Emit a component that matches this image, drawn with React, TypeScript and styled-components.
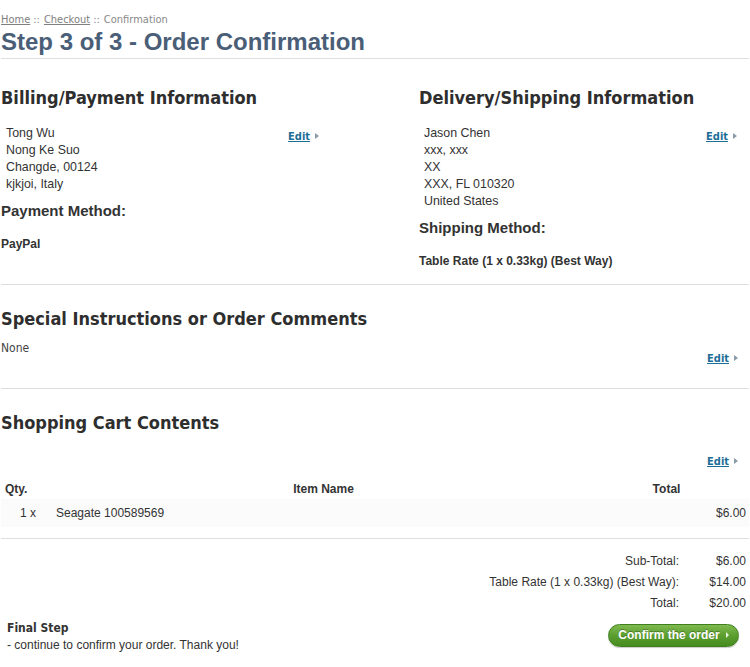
import React from "react";
import styled, {createGlobalStyle} from "styled-components";

const GlobalStyle = createGlobalStyle`
  html, body {
    margin: 0;
    padding: 0;
    background: #ffffff;
  }
  body {
    font-family: "Liberation Sans", Arial, sans-serif;
    font-size: 12px;
    color: #333333;
  }
`;

const tahoma = `"DejaVu Sans Condensed", "DejaVu Sans", Tahoma, sans-serif`;

const Page = styled.div`
  width: 748px;
  padding: 13px 0 0 1px;
`;

const Crumbs = styled.div`
  font-family: ${tahoma};
  font-size: 11px;
  color: #888888;
  line-height: 14px;
`;

const CrumbLink = styled.a`
  color: #808080;
  text-decoration: underline;
`;

const Sep = styled.span`
  margin: 0 4px 0 3px;
`;

const Title = styled.h1`
  margin: 1px 0 0 0;
  padding-bottom: 2px;
  font-family: "Liberation Sans", Arial, sans-serif;
  font-size: 24px;
  line-height: 28px;
  font-weight: bold;
  color: #4a5e77;
  border-bottom: 1px solid #dedede;
`;

const Columns = styled.div`
  display: grid;
  grid-template-columns: 418px 1fr;
  border-bottom: 1px solid #dedede;
  padding-bottom: 16px;
`;

const Section = styled.section<{ $pad?: number }>`
  border-bottom: 1px solid #dedede;
  padding-bottom: ${p => p.$pad ?? 0}px;
`;

const Heading = styled.h2<{ $top?: number }>`
  margin: 0;
  padding-top: ${p => p.$top ?? 28}px;
  font-family: ${tahoma};
  font-size: 18px;
  line-height: 22px;
  font-weight: bold;
  color: #2e2e2e;
`;

const InfoRow = styled.div<{ $width?: number }>`
  display: flex;
  justify-content: space-between;
  align-items: flex-start;
  width: ${p => (p.$width ? `${p.$width}px` : "auto")};
`;

const Address = styled.div`
  padding: 16px 0 0 5px;
  line-height: 17px;
  font-size: 12.4px;
  color: #333333;
`;

const EditLink = styled.a<{ $top?: number }>`
  margin-top: ${p => p.$top ?? 0}px;
  font-family: ${tahoma};
  font-size: 11px;
  font-weight: bold;
  line-height: 14px;
  color: #1d6e97;
  text-decoration: underline;
  white-space: nowrap;
  &::after {
    content: "";
    display: inline-block;
    margin-left: 5px;
    vertical-align: 1px;
    border-left: 4px solid #8a9aa6;
    border-top: 3px solid transparent;
    border-bottom: 3px solid transparent;
  }
`;

const SubHeading = styled.h3`
  margin: 9px 0 0 0;
  font-size: 15px;
  line-height: 18px;
  font-weight: bold;
  color: #333333;
`;

const Method = styled.div`
  margin-top: 17px;
  font-size: 12px;
  font-weight: bold;
  line-height: 14px;
  color: #333333;
`;

const Plain = styled.div`
  font-family: ${tahoma};
  font-size: 12px;
  line-height: 14px;
  color: #444444;
  padding-top: 11px;
`;

const CartGrid = styled.div`
  display: grid;
  grid-template-columns: 50px 545px 1fr;
  margin-top: 12px;
`;

const HeadCell = styled.div<{ $align?: string; $pad?: string }>`
  font-weight: bold;
  font-size: 12px;
  line-height: 16px;
  color: #333333;
  padding: ${p => p.$pad ?? "0 0 2px 4px"};
  text-align: ${p => p.$align ?? "left"};
`;

const BodyCell = styled.div<{ $align?: string; $pad?: string }>`
  background: #fbfbfb;
  font-size: 12px;
  line-height: 28px;
  color: #333333;
  text-align: ${p => p.$align ?? "left"};
  padding: ${p => p.$pad ?? "0"};
`;

const Totals = styled.div`
  display: grid;
  grid-template-columns: 1fr 70px;
  row-gap: 7px;
  padding-top: 15px;
  line-height: 14px;
  font-size: 12px;
  color: #333333;
  text-align: right;
`;

const Amount = styled.div`
  padding-right: 3px;
`;

const Footer = styled.div`
  display: flex;
  justify-content: space-between;
  align-items: flex-start;
  padding: 9px 10px 0 6px;
`;

const FinalNote = styled.div`
  line-height: 17px;
  margin-top: 1px;
  font-size: 12px;
  color: #333333;
`;

const FinalTitle = styled.div`
  font-family: ${tahoma};
  font-weight: bold;
`;

const ConfirmButton = styled.button`
  margin-top: 5px;
  height: 23px;
  width: 131px;
  padding: 0 0 1px 0;
  border: 1px solid #3f7f1e;
  border-radius: 12px;
  background: linear-gradient(to bottom, #7fba4f 0%, #5c9e30 50%, #468c1f 100%);
  box-shadow: 0 1px 1px rgba(0, 0, 0, 0.2);
  color: #ffffff;
  font-family: "Liberation Sans", Arial, sans-serif;
  font-size: 12px;
  font-weight: bold;
  text-shadow: 0 -1px 0 rgba(0, 0, 0, 0.3);
  cursor: pointer;
  &::after {
    content: "";
    display: inline-block;
    margin-left: 6px;
    vertical-align: 1px;
    border-left: 3px solid #e6f2dc;
    border-top: 3px solid transparent;
    border-bottom: 3px solid transparent;
  }
`;

const billing = ["Tong Wu", "Nong Ke Suo", "Changde, 00124", "kjkjoi, Italy"];
const delivery = ["Jason Chen", "xxx, xxx", "XX", "XXX, FL 010320", "United States"];
const totals: [string, string][] = [
    ["Sub-Total:", "$6.00"],
    ["Table Rate (1 x 0.33kg) (Best Way):", "$14.00"],
    ["Total:", "$20.00"],
];

function Lines(props: { lines: string[] }) {
    return (
        <Address>
            {props.lines.map(line => <div key={line}>{line}</div>)}
        </Address>
    )
}

export default function App() {
    return (
        <Page>
            <GlobalStyle/>
            <Crumbs>
                <CrumbLink href="#">Home</CrumbLink><Sep>::</Sep>
                <CrumbLink href="#">Checkout</CrumbLink><Sep>::</Sep>
                Confirmation
            </Crumbs>
            <Title>Step 3 of 3 - Order Confirmation</Title>

            <Columns>
                <div>
                    <Heading>Billing/Payment Information</Heading>
                    <InfoRow $width={318}>
                        <Lines lines={billing}/>
                        <EditLink href="#" $top={21}>Edit</EditLink>
                    </InfoRow>
                    <SubHeading>Payment Method:</SubHeading>
                    <Method>PayPal</Method>
                </div>
                <div>
                    <Heading>Delivery/Shipping Information</Heading>
                    <InfoRow $width={318}>
                        <Lines lines={delivery}/>
                        <EditLink href="#" $top={21}>Edit</EditLink>
                    </InfoRow>
                    <SubHeading>Shipping Method:</SubHeading>
                    <Method>Table Rate (1 x 0.33kg) (Best Way)</Method>
                </div>
            </Columns>

            <Section $pad={22}>
                <Heading $top={23}>Special Instructions or Order Comments</Heading>
                <InfoRow $width={737}>
                    <Plain>None</Plain>
                    <EditLink href="#" $top={22}>Edit</EditLink>
                </InfoRow>
            </Section>

            <Section $pad={11}>
                <Heading $top={23}>Shopping Cart Contents</Heading>
                <InfoRow $width={737}>
                    <span/>
                    <EditLink href="#" $top={21}>Edit</EditLink>
                </InfoRow>
                <CartGrid>
                    <HeadCell>Qty.</HeadCell>
                    <HeadCell $align="center" $pad="0 0 2px 0">Item Name</HeadCell>
                    <HeadCell $align="center" $pad="0 12px 2px 0">Total</HeadCell>
                    <BodyCell $align="right" $pad="0 15px 0 0">1&nbsp;x</BodyCell>
                    <BodyCell $pad="0 0 0 5px">Seagate 100589569</BodyCell>
                    <BodyCell $align="right" $pad="0 3px 0 0">$6.00</BodyCell>
                </CartGrid>
            </Section>

            <Totals>
                {totals.map(([label, value]) => (
                    <React.Fragment key={label}>
                        <div>{label}</div>
                        <Amount>{value}</Amount>
                    </React.Fragment>
                ))}
            </Totals>

            <Footer>
                <FinalNote>
                    <FinalTitle>Final Step</FinalTitle>
                    <div>- continue to confirm your order. Thank you!</div>
                </FinalNote>
                <ConfirmButton>Confirm the order</ConfirmButton>
            </Footer>
        </Page>
    )
}
